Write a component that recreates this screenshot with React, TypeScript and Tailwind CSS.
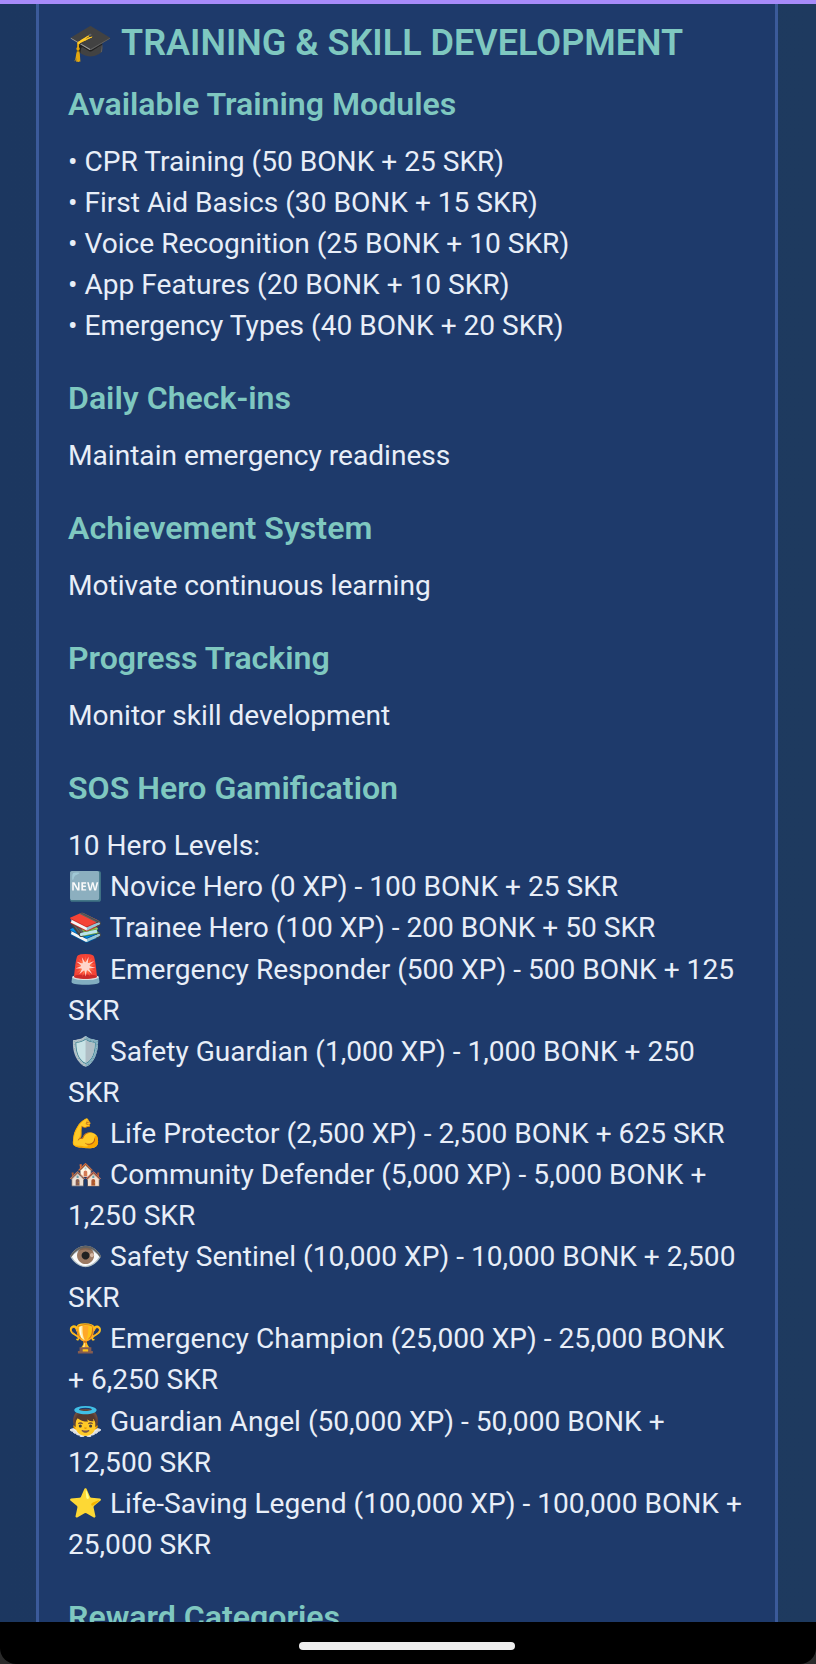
const modules = [
  "• CPR Training (50 BONK + 25 SKR)",
  "• First Aid Basics (30 BONK + 15 SKR)",
  "• Voice Recognition (25 BONK + 10 SKR)",
  "• App Features (20 BONK + 10 SKR)",
  "• Emergency Types (40 BONK + 20 SKR)",
];

const levels = [
  "🆕 Novice Hero (0 XP) - 100 BONK + 25 SKR",
  "📚 Trainee Hero (100 XP) - 200 BONK + 50 SKR",
  "🚨 Emergency Responder (500 XP) - 500 BONK + 125 SKR",
  "🛡️ Safety Guardian (1,000 XP) - 1,000 BONK + 250 SKR",
  "💪 Life Protector (2,500 XP) - 2,500 BONK + 625 SKR",
  "🏘️ Community Defender (5,000 XP) - 5,000 BONK + 1,250 SKR",
  "👁️ Safety Sentinel (10,000 XP) - 10,000 BONK + 2,500 SKR",
  "🏆 Emergency Champion (25,000 XP) - 25,000 BONK + 6,250 SKR",
  "👼 Guardian Angel (50,000 XP) - 50,000 BONK + 12,500 SKR",
  "⭐ Life-Saving Legend (100,000 XP) - 100,000 BONK + 25,000 SKR",
];

const Heading = ({ text }: { text: string }) => (
  <h3 className="mt-[30px] text-[32.1px] leading-[44px] font-semibold text-[#7fc8c0]">{text}</h3>
);

const App = () => {
  return (
    <div className="flex h-[1664px] w-[816px] flex-col overflow-hidden bg-[#2a2a2a] font-['Roboto',sans-serif]">
      <div className="h-1 shrink-0 bg-[#a78bfa]" />
      <div className="min-h-0 flex-1 overflow-hidden bg-gradient-to-r from-[#1c3760] to-[#1e3a5f] pr-[38px] pl-[36px]">
        <div className="h-full border-x-[3px] border-[#3b5a9a] bg-[#1e3a6b] pt-[14px] pr-[31px] pl-[29px] text-[28.1px] leading-[41.1px] text-[#e8eef8]">
          <h2 className="text-[36px] leading-[50px] font-semibold text-[#7fc8c0]">🎓 TRAINING &amp; SKILL DEVELOPMENT</h2>
          <h3 className="mt-[14px] text-[32.1px] leading-[44px] font-semibold text-[#7fc8c0]">Available Training Modules</h3>
          <div className="mt-[14.5px]">
            {modules.map((m) => (
              <p key={m}>{m}</p>
            ))}
          </div>
          <Heading text="Daily Check-ins" />
          <p className="mt-[15px]">Maintain emergency readiness</p>
          <Heading text="Achievement System" />
          <p className="mt-[15px]">Motivate continuous learning</p>
          <Heading text="Progress Tracking" />
          <p className="mt-[15px]">Monitor skill development</p>
          <Heading text="SOS Hero Gamification" />
          <div className="mt-[15px]">
            <p>10 Hero Levels:</p>
            {levels.map((l) => (
              <p key={l}>{l}</p>
            ))}
          </div>
          <Heading text="Reward Categories" />
        </div>
      </div>
      <div className="flex h-[42px] shrink-0 items-start justify-center rounded-b-[16px] bg-black pt-[20px] pr-[2px]">
        <div className="h-2 w-[216px] rounded-full bg-[#eeeeee]" />
      </div>
    </div>
  );
};

export default App;
